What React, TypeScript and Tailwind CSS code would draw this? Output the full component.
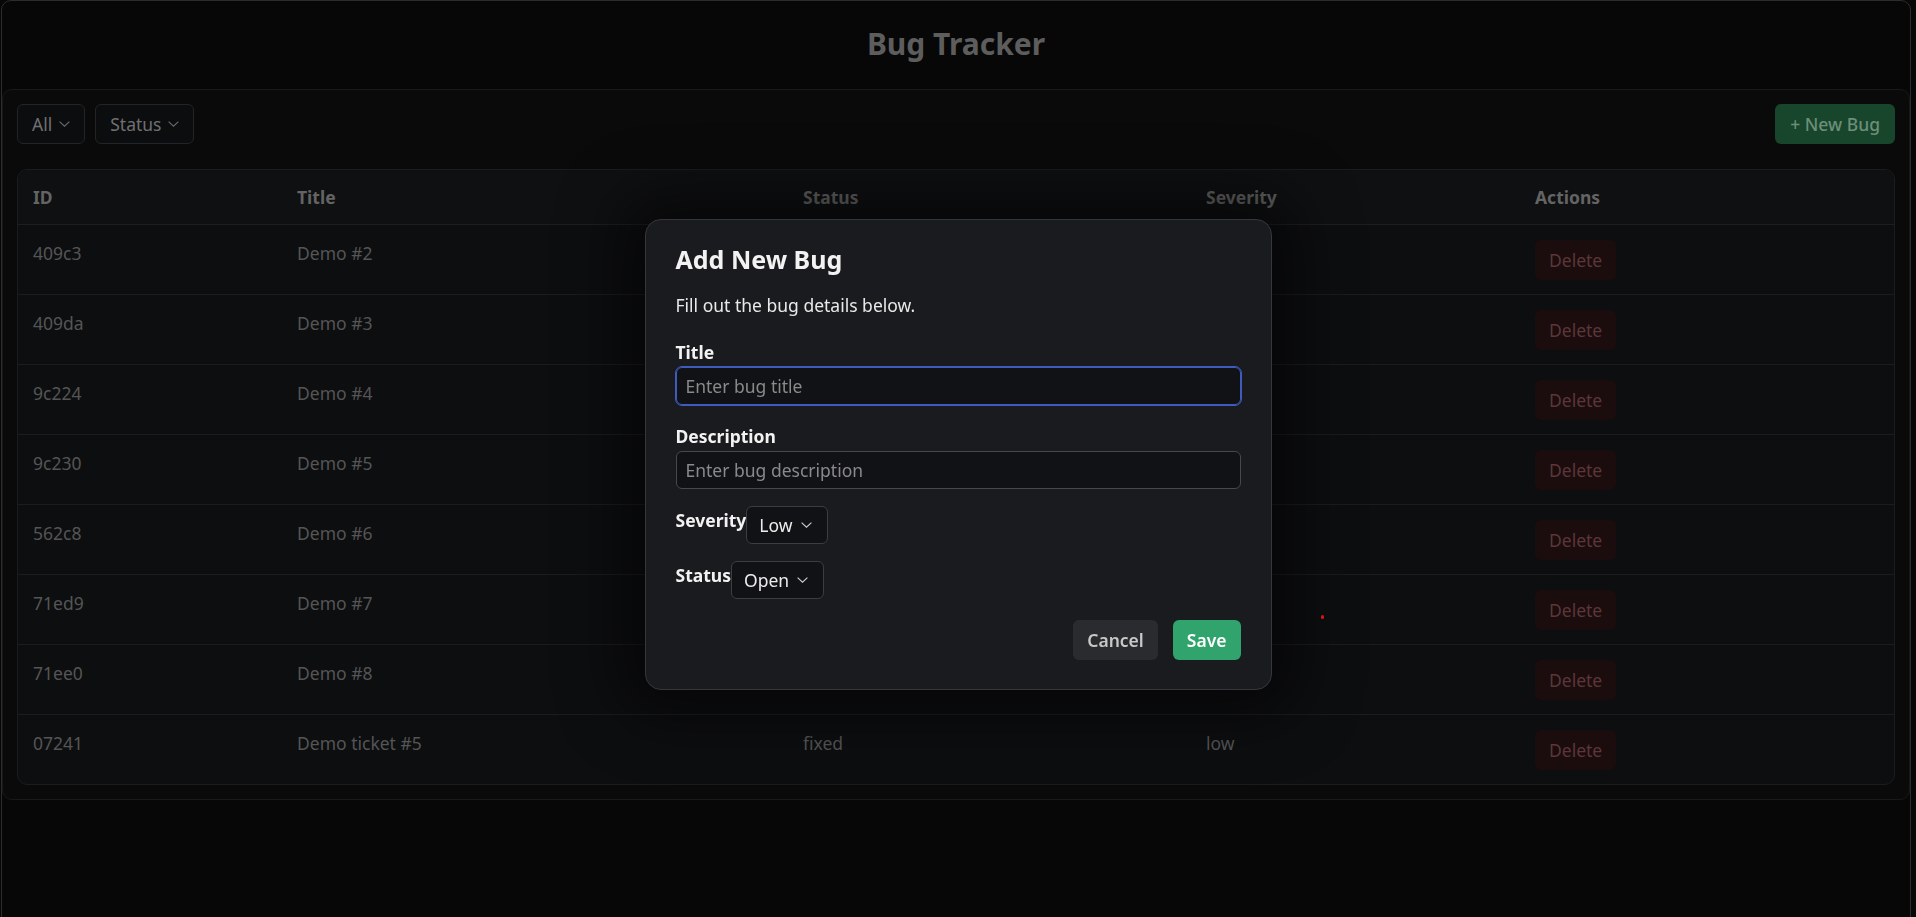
import React from 'react';

type Bug = { id: string; title: string; status: string; severity: string };

const bugs: Bug[] = [
  { id: '409c3', title: 'Demo #2', status: 'open', severity: 'low' },
  { id: '409da', title: 'Demo #3', status: 'open', severity: 'high' },
  { id: '9c224', title: 'Demo #4', status: 'open', severity: 'low' },
  { id: '9c230', title: 'Demo #5', status: 'open', severity: 'high' },
  { id: '562c8', title: 'Demo #6', status: 'open', severity: 'low' },
  { id: '71ed9', title: 'Demo #7', status: 'open', severity: 'low' },
  { id: '71ee0', title: 'Demo #8', status: 'open', severity: 'low' },
  { id: '07241', title: 'Demo ticket #5', status: 'fixed', severity: 'low' },
];

const Chevron = ({ className = '' }: { className?: string }) => (
  <svg viewBox="0 0 11 6" className={`h-[6px] w-[11px] ${className}`} fill="none">
    <path d="M0.6 0.6 L5.5 5.2 L10.4 0.6" stroke="currentColor" strokeWidth="1.1" />
  </svg>
);

const FilterSelect = ({ label }: { label: string }) => (
  <div className="flex h-[40px] items-center gap-[7px] rounded-[6px] border border-[#232428] bg-[#0c0d0f] px-[14px] text-[17.5px] text-[#707070]">
    <span>{label}</span>
    <Chevron className="text-[#6a6a6a]" />
  </div>
);

const ModalSelect = ({ label }: { label: string }) => (
  <div className="flex h-[38px] items-center gap-[8px] rounded-[6px] border border-[#3c3d41] bg-[#111215] pl-[12px] pr-[15px] text-[17.5px] text-[#ececec]">
    <span>{label}</span>
    <Chevron className="text-[#d0d0d0]" />
  </div>
);

const App = () => {
  return (
    <div
      className="h-screen overflow-hidden bg-[#070707]"
      style={{ fontFamily: '"Noto Sans", "Open Sans", sans-serif' }}
    >
      <div className="ml-[1px] mr-[5px] h-[940px] rounded-[10px] border border-[#2c2c2c] bg-[#070707]">
        {/* Header */}
        <header className="flex h-[88px] items-center justify-center pb-[3px]">
          <h1 className="text-[30px] font-bold text-[#5d5d5d]">Bug Tracker</h1>
        </header>

        {/* Main panel */}
        <main className="rounded-[10px] border border-[#18191b] bg-[#0a0a0a] px-[14px] pb-[14px] pt-[14px]">
          <div className="flex items-center justify-between">
            <div className="flex gap-[10px]">
              <FilterSelect label="All" />
              <FilterSelect label="Status" />
            </div>
            <button className="h-[40px] rounded-[6px] bg-[#17462c] px-[15px] text-[17.5px] font-medium text-[#6d8e79]">
              + New Bug
            </button>
          </div>

          <div className="mt-[25px] overflow-hidden rounded-[10px] border border-[#1b1c1f] bg-[#0d0e10]">
            <table className="w-full border-collapse text-left text-[17.5px]">
              <thead>
                <tr className="border-b border-[#1d1e21] bg-[#0f1012] text-[#646464]">
                  <th className="w-[264px] px-[15px] pb-[14px] pt-[15px] font-bold leading-[25px]">ID</th>
                  <th className="w-[506px] px-[15px] pb-[14px] pt-[15px] font-bold leading-[25px]">Title</th>
                  <th className="w-[403px] px-[15px] pb-[14px] pt-[15px] font-bold leading-[25px]">Status</th>
                  <th className="w-[329px] px-[15px] pb-[14px] pt-[15px] font-bold leading-[25px]">Severity</th>
                  <th className="px-[15px] pb-[14px] pt-[15px] font-bold leading-[25px]">Actions</th>
                </tr>
              </thead>
              <tbody>
                {bugs.map((b, i) => (
                  <tr key={b.id} className={i < bugs.length - 1 ? 'border-b border-[#1b1c1f]' : ''}>
                    <td className="px-[15px] pb-[14px] pt-[16px] align-top leading-[25px] text-[#555555]">{b.id}</td>
                    <td className="px-[15px] pb-[14px] pt-[16px] align-top leading-[25px] text-[#555555]">{b.title}</td>
                    <td className="px-[15px] pb-[14px] pt-[16px] align-top leading-[25px] text-[#555555]">{b.status}</td>
                    <td className="px-[15px] pb-[14px] pt-[16px] align-top leading-[25px] text-[#555555]">{b.severity}</td>
                    <td className="px-[15px] pb-[14px] pt-[15px] align-top">
                      <button className="h-[40px] rounded-[6px] bg-[#1b0c0e] px-[14px] leading-[25px] text-[#5c3638]">
                        Delete
                      </button>
                    </td>
                  </tr>
                ))}
              </tbody>
            </table>
          </div>
        </main>
      </div>

      {/* Modal */}
      <div className="fixed inset-0 flex items-center justify-center pb-[8px]">
        <div className="w-[627px] rounded-[16px] border border-[#36373b] bg-[#1a1b1e] px-[30px] pb-[29px] pt-[22px] shadow-[0_0_60px_25px_rgba(0,0,0,0.55)]">
          <h2 className="text-[25px] font-bold leading-[35px] text-[#f2f2f2]">Add New Bug</h2>
          <p className="mt-[16px] text-[17.5px] leading-[25px] text-[#e9e9e9]">Fill out the bug details below.</p>

          <label className="mt-[22px] block text-[17.5px] font-bold leading-[25px] text-[#f2f2f2]">Title</label>
          <input
            placeholder="Enter bug title"
            className="mt-[2px] block h-[38px] w-full rounded-[6px] border border-[#3e5bbd] bg-[#111215] px-[9px] text-[17.5px] text-[#ececec] outline outline-1 outline-[#3e5bbd] placeholder:text-[#8a8a8a]"
          />

          <label className="mt-[19px] block text-[17.5px] font-bold leading-[25px] text-[#f2f2f2]">Description</label>
          <input
            placeholder="Enter bug description"
            className="mt-[2px] block h-[38px] w-full rounded-[6px] border border-[#47484c] bg-[#111215] px-[9px] text-[17.5px] text-[#ececec] outline-none placeholder:text-[#8a8a8a]"
          />

          <div className="mt-[17px] flex items-start">
            <span className="pt-[2px] text-[17.5px] font-bold leading-[25px] text-[#f2f2f2]">Severity</span>
            <ModalSelect label="Low" />
          </div>

          <div className="mt-[17px] flex items-start">
            <span className="pt-[2px] text-[17.5px] font-bold leading-[25px] text-[#f2f2f2]">Status</span>
            <ModalSelect label="Open" />
          </div>

          <div className="mt-[21px] flex justify-end gap-[15px]">
            <button className="h-[40px] rounded-[6px] bg-[#2a2b2f] px-[14px] text-[17.5px] font-semibold text-[#c8c8c8]">
              Cancel
            </button>
            <button className="h-[40px] rounded-[6px] bg-[#30a46c] px-[14px] text-[17.5px] font-semibold text-white">
              Save
            </button>
          </div>
        </div>
      </div>

      {/* stray red dot */}
      <div className="fixed left-[1321px] top-[615px] h-[4px] w-[3px] rounded-full bg-[#e01010]" />
    </div>
  );
};

export default App;
